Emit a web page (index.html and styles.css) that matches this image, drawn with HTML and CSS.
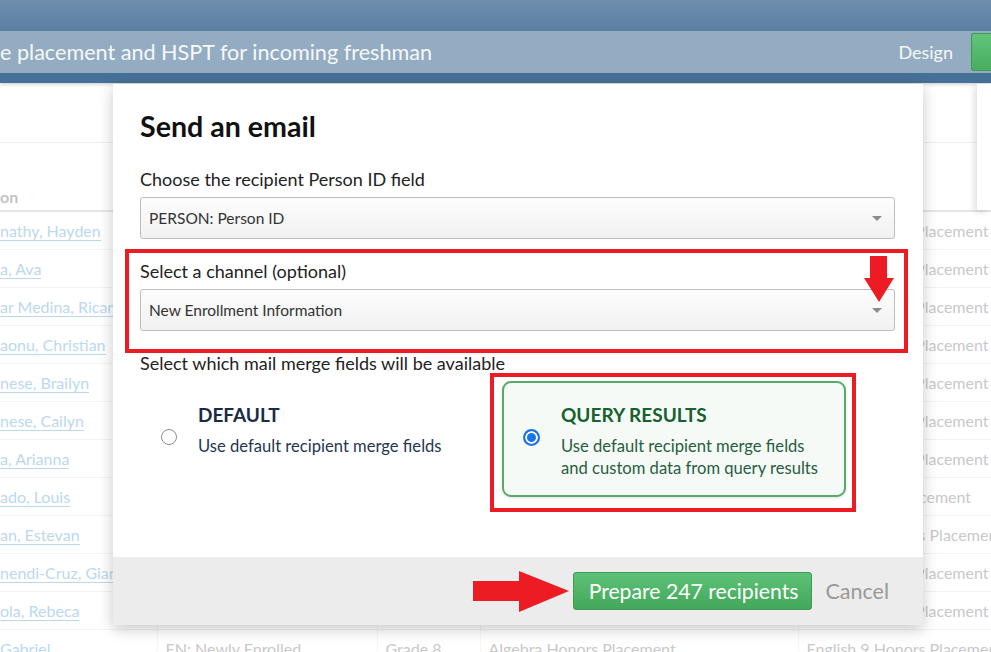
FILE: index.html
```html
<!DOCTYPE html>
<html lang="en">
<head>
    <meta charset="UTF-8">
    <meta name="viewport" content="width=device-width, initial-scale=1.0">
    <title>Send an email</title>
    <link rel="stylesheet" href="styles.css">
</head>
<body>
    <header class="app-header">
        <div class="topbar"></div>
        <div class="titlebar">
            <h1 class="query-title">e placement and HSPT for incoming freshman</h1>
            <a href="#" class="design-link">Design</a>
            <button type="button" class="run-button" aria-label="Run"></button>
        </div>
        <div class="stripe"></div>
    </header>

    <main class="results">
        <div class="results-toolbar"></div>
        <table class="results-table">
            <thead>
                <tr><th>on</th><th></th><th></th><th></th><th></th></tr>
            </thead>
            <tbody>
                <tr><td><a href="#">nathy, Hayden</a></td><td>EN: Newly Enrolled</td><td>Grade 8</td><td>Algebra Honors Placement</td><td>English 9 Accel Placement</td></tr>
                <tr><td><a href="#">a, Ava</a></td><td>EN: Newly Enrolled</td><td>Grade 8</td><td>Algebra Honors Placement</td><td>English 9 Accel Placement</td></tr>
                <tr><td><a href="#">ar Medina, Ricardo</a></td><td>EN: Newly Enrolled</td><td>Grade 8</td><td>Algebra Honors Placement</td><td>English 9 Accel Placement</td></tr>
                <tr><td><a href="#">aonu, Christian</a></td><td>EN: Newly Enrolled</td><td>Grade 8</td><td>Algebra Honors Placement</td><td>English 9 Accel Placement</td></tr>
                <tr><td><a href="#">nese, Brailyn</a></td><td>EN: Newly Enrolled</td><td>Grade 8</td><td>Algebra Honors Placement</td><td>English 9 Accel Placement</td></tr>
                <tr><td><a href="#">nese, Cailyn</a></td><td>EN: Newly Enrolled</td><td>Grade 8</td><td>Algebra Honors Placement</td><td>English 9 Accel Placement</td></tr>
                <tr><td><a href="#">a, Arianna</a></td><td>EN: Newly Enrolled</td><td>Grade 8</td><td>Algebra Honors Placement</td><td>English 9 Accel Placement</td></tr>
                <tr><td><a href="#">ado, Louis</a></td><td>EN: Newly Enrolled</td><td>Grade 8</td><td>Algebra Placement</td><td>English 9 CP Placement</td></tr>
                <tr><td><a href="#">an, Estevan</a></td><td>EN: Newly Enrolled</td><td>Grade 8</td><td>Algebra Placement</td><td>English 9 Honors Placement</td></tr>
                <tr><td><a href="#">nendi-Cruz, Gianna</a></td><td>EN: Newly Enrolled</td><td>Grade 8</td><td>Algebra Honors Placement</td><td>English 9 Accel Placement</td></tr>
                <tr><td><a href="#">ola, Rebeca</a></td><td>EN: Newly Enrolled</td><td>Grade 8</td><td>Algebra Honors Placement</td><td>English 9 Accel Placement</td></tr>
                <tr><td><a href="#">Gabriel</a></td><td>EN: Newly Enrolled</td><td>Grade 8</td><td>Algebra Honors Placement</td><td>English 9 Honors Placement</td></tr>
            </tbody>
        </table>
        <div class="side-panel"></div>
    </main>

    <div class="modal">
        <div class="modal-body">
            <h2 class="modal-title">Send an email</h2>
            <label class="field-label first">Choose the recipient Person ID field</label>
            <div class="select">PERSON: Person ID<span class="caret"></span></div>
            <label class="field-label">Select a channel (optional)</label>
            <div class="select">New Enrollment Information<span class="caret"></span></div>
            <p class="field-label">Select which mail merge fields will be available</p>
            <div class="merge-options">
                <div class="merge-option">
                    <span class="radio"></span>
                    <div class="option-text">
                        <div class="option-title">DEFAULT</div>
                        <div class="option-desc">Use default recipient merge fields</div>
                    </div>
                </div>
                <div class="merge-option selected">
                    <span class="radio checked"></span>
                    <div class="option-text">
                        <div class="option-title">QUERY RESULTS</div>
                        <div class="option-desc">Use default recipient merge fields and custom data from query results</div>
                    </div>
                </div>
            </div>
        </div>
        <div class="modal-footer">
            <button type="button" class="btn-prepare">Prepare 247 recipients</button>
            <button type="button" class="btn-cancel">Cancel</button>
        </div>
    </div>

    <!-- annotations drawn over the screenshot -->
    <div class="mark mark-channel"></div>
    <div class="mark mark-results"></div>
    <svg class="arrow arrow-down" width="30" height="46" viewBox="0 0 30 46">
        <polygon points="6,0 23,0 23,22 30,22 15,46 0,22 6,22" fill="#ed1c24"/>
    </svg>
    <svg class="arrow arrow-right" width="96" height="41" viewBox="0 0 96 41">
        <polygon points="0,10 46,10 46,0 96,20 46,41 46,30 0,30" fill="#ed1c24"/>
    </svg>
</body>
</html>
```

FILE: styles.css
```css
body {
    font-family: Lato, "Open Sans", sans-serif;
    margin: 0;
    padding: 0;
    width: 991px;
    height: 652px;
    overflow: hidden;
    position: relative;
    background: #fff;
}
.topbar {
    height: 31px;
    background: linear-gradient(#6e8fae, #5a7fa2);
}
.titlebar {
    height: 42px;
    background: #93acc1;
    display: flex;
    align-items: center;
    white-space: nowrap;
}
.query-title {
    margin: 0;
    flex-grow: 1;
    color: #f6f8fa;
    font-size: 21.6px;
    font-weight: normal;
}
.design-link {
    color: #f6f8fa;
    text-decoration: none;
    font-size: 18px;
    margin-right: 18px;
}
.run-button {
    flex-shrink: 0;
    width: 20px;
    height: 38px;
    padding: 0;
    background: linear-gradient(#60c47a, #49ad60);
    border: 1px solid #3d9a50;
    border-right: none;
    border-radius: 3px 0 0 3px;
}
.stripe {
    height: 10px;
    background: #467196;
    box-shadow: 0 2px 3px rgba(0, 0, 0, 0.15);
}
.results-toolbar {
    height: 59px;
    border-bottom: 1px solid #eee;
}
.results-table {
    width: 991px;
    table-layout: fixed;
    border-collapse: collapse;
    font-size: 16px;
    color: #c9c9c9;
}
.results-table th, .results-table td {
    box-sizing: border-box;
}
.results-table th:nth-child(1) { width: 157px; padding-left: 0; }
.results-table td:nth-child(1) { padding-left: 0; }
.results-table th:nth-child(2) { width: 220px; }
.results-table th:nth-child(3) { width: 103px; }
.results-table th:nth-child(4) { width: 318px; }
.results-table th {
    height: 68px;
    vertical-align: bottom;
    text-align: left;
    padding: 0 8px 4px;
    color: #c4c4c4;
    font-weight: bold;
    border-bottom: 2px solid #e6e6e6;
}
.results-table td {
    height: 38px;
    padding: 0 8px;
    white-space: nowrap;
    overflow: hidden;
    border-bottom: 1px solid #f3f3f3;
    border-left: 1px dotted #ececec;
}
.results-table td:nth-child(1) {
    border-left: none;
}
.results-table a {
    color: #bcd8ef;
    text-decoration: none;
    border-bottom: 1px solid #bcd8ef;
}
.side-panel {
    position: absolute;
    left: 977px;
    top: 84px;
    width: 14px;
    height: 126px;
    background: #fff;
    box-shadow: -3px 2px 6px rgba(0, 0, 0, 0.12);
}
.modal {
    position: absolute;
    left: 113px;
    top: 84px;
    width: 810px;
    height: 541px;
    background: #fff;
    display: flex;
    flex-direction: column;
    box-shadow: 0 4px 14px rgba(0, 0, 0, 0.22);
}
.modal-body {
    flex-grow: 1;
    padding: 26px 28px 0 27px;
}
.modal-title {
    margin: 0;
    font-size: 28.6px;
    line-height: 32px;
    color: #111;
}
.field-label {
    display: block;
    margin: 21px 0 7px;
    font-size: 18px;
    line-height: 22px;
    color: #222;
}
.field-label.first {
    margin-top: 26px;
}
.select {
    position: relative;
    height: 40px;
    line-height: 40px;
    padding: 0 8px;
    border: 1px solid #bdbdbd;
    border-radius: 3px;
    background: linear-gradient(#fdfdfd, #f1f1f1);
    font-size: 15.5px;
    color: #333;
}
.caret {
    position: absolute;
    right: 12px;
    top: 18px;
    border-left: 5px solid transparent;
    border-right: 5px solid transparent;
    border-top: 5px solid #8c8c8c;
}
.merge-options {
    display: flex;
    gap: 18px;
}
.merge-option {
    width: 340px;
    height: 112px;
    border: 2px solid transparent;
    border-radius: 9px;
    display: flex;
    align-items: flex-start;
}
.merge-option.selected {
    border-color: #56ab66;
    background: #f5faf6;
    box-shadow: 0 1px 3px rgba(0, 0, 0, 0.12);
}
.radio {
    width: 14px;
    height: 14px;
    margin: 46px 21px 0 19px;
    border: 1.5px solid #8d8d8d;
    border-radius: 50%;
    background: #fff;
    flex-shrink: 0;
}
.radio.checked {
    border: 2px solid #1a73e8;
    width: 13px;
    height: 13px;
    box-shadow: inset 0 0 0 2px #fff;
    background: #1a73e8;
}
.option-text {
    padding-top: 20px;
}
.option-title {
    font-size: 19px;
    line-height: 24px;
    font-weight: bold;
    color: #1b2b45;
}
.option-desc {
    margin-top: 8px;
    font-size: 16.6px;
    line-height: 22px;
    color: #27364f;
    width: 262px;
}
.selected .option-title {
    color: #17602f;
}
.selected .option-desc {
    color: #285e3e;
}
.modal-footer {
    height: 68px;
    background: #ececec;
    display: flex;
    justify-content: flex-end;
    align-items: center;
    gap: 13px;
    padding-right: 34px;
}
.btn-prepare {
    height: 38px;
    padding: 0 13px 0 15px;
    background: linear-gradient(#5dc177, #44a85b);
    border: 1px solid #3d9a50;
    border-radius: 3px;
    color: #fff;
    font-family: inherit;
    font-size: 21.2px;
}
.btn-cancel {
    background: none;
    border: none;
    padding: 0;
    color: #999;
    font-family: inherit;
    font-size: 21.5px;
}
.mark {
    position: absolute;
    border: 4px solid #ed1c24;
}
.mark-channel {
    left: 125px;
    top: 249px;
    width: 775px;
    height: 96px;
}
.mark-results {
    left: 490px;
    top: 373px;
    width: 358px;
    height: 131px;
}
.arrow {
    position: absolute;
}
.arrow-down {
    left: 864px;
    top: 256px;
}
.arrow-right {
    left: 473px;
    top: 571px;
}
```
